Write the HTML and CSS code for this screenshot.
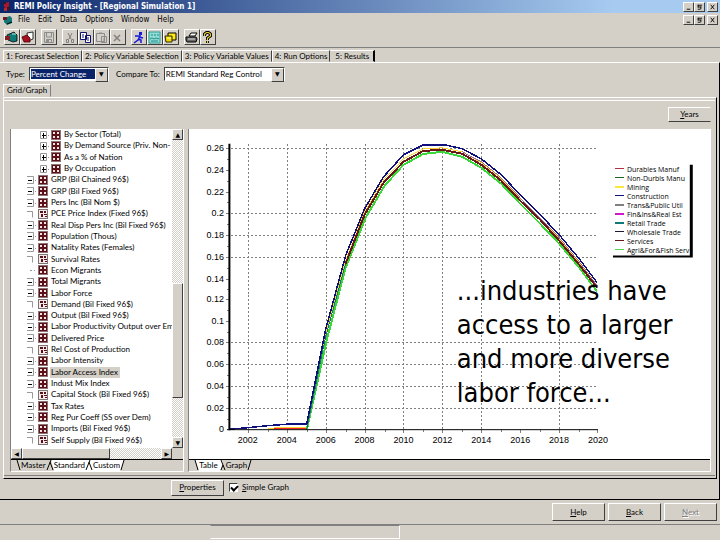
FILE: index.html
```html
<!DOCTYPE html>
<html lang="en">
<head>
<meta charset="utf-8">
<title>REMI Policy Insight - [Regional Simulation 1]</title>
<link rel="stylesheet" href="styles.css">
</head>
<body>
<svg class="defs" aria-hidden="true">
  <symbol id="node" viewBox="0 0 10 10"><rect width="10" height="10" fill="#8c7474"/><rect x="1" y="1" width="8" height="8" fill="#5c1018"/><path d="M2 2h2v2H2zM6 2h2v2H6zM2 6h2v2H2zM6 6h2v2H6z" fill="#f4e4e4"/></symbol>
  <symbol id="leaf" viewBox="0 0 10 10"><rect width="10" height="10" fill="#7c7474"/><rect x="1" y="1" width="8" height="8" fill="#f4e8e8"/><path d="M2 2h3v2H2zM6 2h2v2H6zM3 5h2v3H3zM6 5h3v1H6zM7 7h2v1H7z" fill="#581018"/></symbol>
  <symbol id="plus" viewBox="0 0 10 10"><path d="M1.500 1.500h6v7h-6z" fill="#fff" stroke="#999"/><path d="M3 5.500h4M4.500 3v5" stroke="#000"/><path d="M9 5.500h1" stroke="#999"/></symbol>
  <symbol id="minus" viewBox="0 0 10 10"><path d="M1 1.500h6.500v7H1" fill="none" stroke="#999"/><path d="M2 5.500h4" stroke="#000"/><path d="M9 5.500h1" stroke="#999"/></symbol>
  <symbol id="hook" viewBox="0 0 10 10"><path d="M1 2.500h5.500v6" fill="none" stroke="#999"/></symbol>
  <symbol id="dash" viewBox="0 0 10 10"><path d="M4 5.500h2M8 5.500h1" fill="none" stroke="#999"/></symbol>
  <symbol id="min" viewBox="0 0 10 9"><path d="M3 7h4" stroke="#000"/></symbol>
  <symbol id="res" viewBox="0 0 10 9"><path d="M3 2.500h5M3.500 2v3M3 4.500h4M6.500 4v3M3 7h3" stroke="#000" fill="none"/></symbol>
  <symbol id="cls" viewBox="0 0 10 9"><path d="M3 2l4 5M7 2L3 7" stroke="#000"/></symbol>
</svg>
<div class="app">
  <header class="titlebar">
    <svg class="appicon" viewBox="0 0 9 12"><path d="M2 2l5-1v4l-2 3-3-2z" fill="#a81828"/><path d="M1 1h3v2H1zM5 6h3v3H5z" fill="#381828"/><path d="M2 7h3v3H2z" fill="#b02838"/></svg>
    <h1>REMI Policy Insight - [Regional Simulation 1]</h1>
    <div class="winbtns"><button aria-label="Minimize"><svg><use href="#min"/></svg></button><button aria-label="Restore"><svg><use href="#res"/></svg></button><button class="close" aria-label="Close"><svg><use href="#cls"/></svg></button></div>
  </header>
  <nav class="menubar">
    <svg class="docicon" viewBox="0 0 10 11"><path d="M1 3l6-2 2 2v5l-5 2-3-3z" fill="#107878"/><path d="M0 2h4v3H0z" fill="#701820"/><path d="M4 9l5-2" stroke="#000"/></svg>
    <a href="#">File</a><a href="#">Edit</a><a href="#">Data</a><a href="#">Options</a><a href="#">Window</a><a href="#">Help</a>
    <div class="winbtns"><button aria-label="Minimize document"><svg><use href="#min"/></svg></button><button aria-label="Restore document"><svg><use href="#res"/></svg></button><button class="close" aria-label="Close document"><svg><use href="#cls"/></svg></button></div>
  </nav>
  <div class="toolbar">
    <div class="group">
      <button aria-label="Open forecast"><svg viewBox="0 0 13 13"><path d="M2 4l7-3 3 3v6l-4 1-5-2z" fill="#0c7c78" stroke="#000" stroke-width=".8"/><path d="M0 5h5v4H0z" fill="#802020"/><path d="M7 3h4" stroke="#b8e8e0"/></svg></button>
      <button aria-label="Close forecast"><svg viewBox="0 0 13 13"><path d="M6 2l6-1v7l-5 2z" fill="#fff" stroke="#000" stroke-width=".8"/><path d="M1 6l5-2 3 3v4H3z" fill="#a81020" stroke="#400" stroke-width=".8"/></svg></button>
    </div>
    <div class="group">
      <button aria-label="Save"><svg viewBox="0 0 13 13"><path d="M2.500 1.500h9v10h-9zM4.500 2v4h5V2M4.500 12V8.500h5V12" fill="none" stroke="#8c8c8c"/><path d="M5 9h2v2H5z" fill="#8c8c8c"/></svg></button>
    </div>
    <div class="group">
      <button aria-label="Cut"><svg viewBox="0 0 13 13"><path d="M5 2l3 6M9 2L6 8" stroke="#808080"/><path d="M3.500 8.500h2v3h-2zM8.500 8.500h2v3h-2z" fill="none" stroke="#808080"/></svg></button>
      <button aria-label="Copy"><svg viewBox="0 0 13 13"><path d="M1.500 1.500h6v7h-6zM6.500 4.500h5v7h-5z" fill="#fff" stroke="#10106c"/><path d="M3 4h2M3 6h2M8 7h2M8 9h2" stroke="#10106c"/></svg></button>
      <button aria-label="Paste"><svg viewBox="0 0 13 13"><path d="M1.500 2.500h8v8h-8zM6.500 5.500h5v6h-5z" fill="#d4d0c8" stroke="#8c8c8c"/><path d="M4 2h3M8 8h2M8 10h2" stroke="#8c8c8c"/></svg></button>
      <button aria-label="Delete"><svg viewBox="0 0 13 13"><path d="M3 4l6 6M9 4l-6 6" stroke="#808080" stroke-width="1.500"/></svg></button>
    </div>
    <div class="group">
      <button aria-label="Run"><svg viewBox="0 0 13 13"><path d="M7 1h3v3H7z" fill="#1818d8"/><path d="M3 5h5l-2 4-4 3M7 6l4 1M6 8l3 1v3" fill="none" stroke="#1818d8" stroke-width="1.500"/></svg></button>
      <button aria-label="Grid"><svg viewBox="0 0 13 13"><path d="M1 1h11v11H1z" fill="#90dcd4" stroke="#30a09c"/><path d="M3 4h2M6 4h2M9 4h2M2 8l2-1 2 1 2-1 3 1M3 10h7" stroke="#208c88" fill="none"/></svg></button>
      <button aria-label="Folder"><svg viewBox="0 0 13 13"><path d="M4 2h8v7H4z" fill="#ffe818" stroke="#000"/><path d="M1 5h7v6H2z" fill="#f0d808" stroke="#302800"/><path d="M3 7h4" stroke="#fff8b0"/></svg></button>
    </div>
    <div class="group">
      <button aria-label="Print"><svg viewBox="0 0 13 13"><path d="M4 5l2-3h6l-2 3z" fill="#fff" stroke="#000"/><path d="M1 6h10l1 2-1 3H2L1 9z" fill="#686868" stroke="#000"/><path d="M3 8h7" stroke="#ddd"/></svg></button>
      <button aria-label="Help"><svg viewBox="0 0 13 13"><path d="M3.500 5V3l2-1.500h2L9.500 3v2l-3 2v2M6.500 10v2" fill="none" stroke="#000" stroke-width="3"/><path d="M3.500 5V3l2-1.500h2L9.500 3v2l-3 2v2M6.500 10v2" fill="none" stroke="#e8d020" stroke-width="1.200"/></svg></button>
    </div>
  </div>
  <div class="steps" role="tablist">
    <button role="tab">1: Forecast Selection</button><button role="tab">2: Policy Variable Selection</button><button role="tab">3: Policy Variable Values</button><button role="tab">4: Run Options</button><button role="tab" class="on" aria-selected="true">5: Results</button>
  </div>
  <main class="page">
    <div class="filters">
      <label for="type">Type:</label>
      <span class="pick pick-type"><select id="type"><option>Percent Change</option></select></span>
      <label for="cmp">Compare To:</label>
      <span class="pick pick-cmp"><select id="cmp"><option>REMI Standard Reg Control</option></select></span>
    </div>
    <div class="subtabs"><button>Grid/Graph</button></div>
    <section class="frame">
      <div class="frame-in">
        <div class="years"><button class="btn"><u>Y</u>ears</button></div>
        <div class="panes">
          <div class="pane">
            <div class="treebox">
              <ul class="tree">
                <li class="sub"><svg><use href="#plus"/></svg><svg><use href="#node"/></svg><span>By Sector (Total)</span></li>
                <li class="sub"><svg><use href="#plus"/></svg><svg><use href="#node"/></svg><span>By Demand Source (Priv. Non-</span></li>
                <li class="sub"><svg><use href="#plus"/></svg><svg><use href="#node"/></svg><span>As a % of Nation</span></li>
                <li class="sub"><svg><use href="#plus"/></svg><svg><use href="#node"/></svg><span>By Occupation</span></li>
                <li><svg><use href="#minus"/></svg><svg><use href="#node"/></svg><span>GRP (Bil Chained 96$)</span></li>
                <li><svg><use href="#minus"/></svg><svg><use href="#node"/></svg><span>GRP (Bil Fixed 96$)</span></li>
                <li><svg><use href="#minus"/></svg><svg><use href="#node"/></svg><span>Pers Inc (Bil Nom $)</span></li>
                <li><svg><use href="#hook"/></svg><svg><use href="#leaf"/></svg><span>PCE Price Index (Fixed 96$)</span></li>
                <li><svg><use href="#minus"/></svg><svg><use href="#node"/></svg><span>Real Disp Pers Inc (Bil Fixed 96$)</span></li>
                <li><svg><use href="#minus"/></svg><svg><use href="#node"/></svg><span>Population (Thous)</span></li>
                <li><svg><use href="#minus"/></svg><svg><use href="#node"/></svg><span>Natality Rates (Females)</span></li>
                <li><svg><use href="#hook"/></svg><svg><use href="#leaf"/></svg><span>Survival Rates</span></li>
                <li><svg><use href="#dash"/></svg><svg><use href="#node"/></svg><span>Econ Migrants</span></li>
                <li><svg><use href="#minus"/></svg><svg><use href="#node"/></svg><span>Total Migrants</span></li>
                <li><svg><use href="#minus"/></svg><svg><use href="#node"/></svg><span>Labor Force</span></li>
                <li><svg><use href="#hook"/></svg><svg><use href="#leaf"/></svg><span>Demand (Bil Fixed 96$)</span></li>
                <li><svg><use href="#minus"/></svg><svg><use href="#node"/></svg><span>Output (Bil Fixed 96$)</span></li>
                <li><svg><use href="#minus"/></svg><svg><use href="#node"/></svg><span>Labor Productivity Output over Em</span></li>
                <li><svg><use href="#minus"/></svg><svg><use href="#node"/></svg><span>Delivered Price</span></li>
                <li><svg><use href="#hook"/></svg><svg><use href="#leaf"/></svg><span>Rel Cost of Production</span></li>
                <li><svg><use href="#minus"/></svg><svg><use href="#node"/></svg><span>Labor Intensity</span></li>
                <li><svg><use href="#minus"/></svg><svg><use href="#node"/></svg><span class="sel">Labor Access Index</span></li>
                <li><svg><use href="#minus"/></svg><svg><use href="#node"/></svg><span>Indust Mix Index</span></li>
                <li><svg><use href="#hook"/></svg><svg><use href="#leaf"/></svg><span>Capital Stock (Bil Fixed 96$)</span></li>
                <li><svg><use href="#minus"/></svg><svg><use href="#node"/></svg><span>Tax Rates</span></li>
                <li><svg><use href="#minus"/></svg><svg><use href="#node"/></svg><span>Reg Pur Coeff (SS over Dem)</span></li>
                <li><svg><use href="#minus"/></svg><svg><use href="#node"/></svg><span>Imports (Bil Fixed 96$)</span></li>
                <li><svg><use href="#hook"/></svg><svg><use href="#leaf"/></svg><span>Self Supply (Bil Fixed 96$)</span></li>
              </ul>
              <div class="vbar"><i class="cap up"></i><i class="gap-a"></i><i class="thumb"></i><i class="gap-b"></i><i class="cap down"></i></div>
              <div class="hbar"><i class="cap left"></i><i class="thumb"></i><i class="gap-b"></i><i class="cap right"></i></div>
            </div>
            <div class="sheets">
              <svg class="edge" viewBox="0 0 5 11"><path d="M1 0l3 10" stroke="#000"/></svg><button>Master</button><svg class="join" viewBox="0 0 8 11"><path d="M5 0h3v10z" fill="#fff"/><path d="M5 0L1 10M4 2l3 8" stroke="#000"/></svg><button class="off">Standard</button><svg class="join" viewBox="0 0 8 11"><path d="M0 0h8v11H0z" fill="#fff"/><path d="M5 0L1 10M4 2l3 8" stroke="#000"/></svg><button class="off">Custom</button><svg class="edge" viewBox="0 0 5 11"><path d="M0 0h4L1 10H0z" fill="#fff"/><path d="M4 0L1 10" stroke="#000"/></svg>
            </div>
          </div>
          <div class="pane">
            <div class="chartbox">
              <svg class="chart" viewBox="188 129 522 329" role="img" aria-label="Labor access index by industry">
                <g class="grid">
                  <path d="M230 147.500H598M230 212.500H598M230 234.500H598M230 256.500H598M230 342.500H598M230 364.500H598M230 386.500H598M230 408.500H598"/>
                  <path d="M247.500 143V429M286.500 143V429M325.500 143V429M364.500 143V429M403.500 143V429M442.500 143V429M481.500 143V429M559.500 143V429"/>
                </g>
                <path class="ticks" d="M225 147.500h3M225 169.500h3M225 191.500h3M225 212.500h3M225 234.500h3M225 256.500h3M225 278.500h3M225 299.500h3M225 321.500h3M225 342.500h3M225 364.500h3M225 386.500h3M225 408.500h3M226 158.500h2M226 180.500h2M226 201.500h2M226 223.500h2M226 245.500h2M226 267.500h2M226 288.500h2M226 310.500h2M226 332.500h2M226 353.500h2M226 375.500h2M226 397.500h2M226 419.500h2M247.500 430v3M267.500 430v2M286.500 430v3M306.500 430v2M325.500 430v3M345.500 430v2M364.500 430v3M384.500 430v2M403.500 430v3M423.500 430v2M442.500 430v3M462.500 430v2M481.500 430v3M501.500 430v2M520.500 430v3M540.500 430v2M559.500 430v3M579.500 430v2M597.500 430v3"/>
                <path class="line" stroke="#f02020" d="M267 428.500L306 428.500"/>
                <path class="line" stroke="#ffd030" d="M267 428L306 427L325 333L345 260L364 211L383 179L403 158L423 148L442 147L462 151L481 162L501 178L520 198L540 217L559 238L579 262L597 285"/>
                <path class="line wide" stroke="#38d838" d="M306 430L326 340L345 267L365 217L384 185L403 164L423 153L442 151L462 156L481 167L501 183L520 203L540 223L559 243L579 267L597 291"/>
                <path class="line" stroke="#207070" d="M306 429L325 336L345 263"/>
                <path class="line" stroke="#987098" d="M462 151L481 161L501 177L520 197L540 217L559 237L579 261L597 285"/>
                <path class="line wide" stroke="#681818" d="M345 263L364 214L383 182L403 161L423 150L442 149L462 153L481 164L501 180L520 200L540 219L559 240L579 264L597 287"/>
                <path class="line blue" stroke="#10107c" d="M229 429L247 427.500L267 425.500L286 424L306 424L325 329L345 255L364 208L383 176L403 154L423 144L445 144L462 148L481 158L501 174L520 194L540 214L559 234L579 258L597 282"/>
                <path d="M228.500 143V430" stroke="#000" stroke-width="2"/><path d="M226 429.500H598" stroke="#000"/>
                <g class="ylab">
                  <text x="223" y="150">0.26</text><text x="223" y="172">0.24</text><text x="223" y="194">0.22</text><text x="223" y="215">0.2</text><text x="223" y="237">0.18</text><text x="223" y="259">0.16</text><text x="223" y="281">0.14</text><text x="223" y="302">0.12</text><text x="223" y="324">0.1</text><text x="223" y="345">0.08</text><text x="223" y="367">0.06</text><text x="223" y="389">0.04</text><text x="223" y="411">0.02</text><text x="223" y="432">0</text>
                </g>
                <g class="xlab">
                  <text x="247" y="443">2002</text><text x="286" y="443">2004</text><text x="325" y="443">2006</text><text x="364" y="443">2008</text><text x="403" y="443">2010</text><text x="442" y="443">2012</text><text x="481" y="443">2014</text><text x="520" y="443">2016</text><text x="559" y="443">2018</text><text x="598" y="443">2020</text>
                </g>
                <path d="M613 164h80v93h-80z" fill="#000"/><path d="M612 162h78v93h-78z" fill="#fff"/>
                <g class="keys">
                  <path stroke="#b03040" d="M615 168h9"/><path stroke="#206020" d="M615 177h9"/><path stroke="#f8e840" stroke-width="2" d="M615 186h9"/><path stroke="#101080" d="M615 195h9"/><path stroke="#808080" stroke-width="2" d="M615 204h9"/><path stroke="#d018d0" stroke-width="2" d="M615 213h9"/><path stroke="#107878" stroke-width="2" d="M615 222h9"/><path stroke="#181830" d="M615 231h9"/><path stroke="#601818" d="M615 240h9"/><path stroke="#50d850" d="M615 249h9"/>
                </g>
                <g class="legend">
                  <text x="627" y="171">Durables Manuf</text><text x="627" y="180">Non-Durbls Manu</text><text x="627" y="189">Mining</text><text x="627" y="198">Construction</text><text x="627" y="207">Trans&amp;Public Util</text><text x="627" y="216">Fin&amp;Ins&amp;Real Est</text><text x="627" y="225">Retail Trade</text><text x="627" y="234">Wholesale Trade</text><text x="627" y="243">Services</text><text x="627" y="252">Agri&amp;For&amp;Fish Serv</text>
                </g>
              </svg>
              <p class="note">...industries have access to a larger and more diverse labor force...</p>
            </div>
            <div class="sheets">
              <svg class="edge" viewBox="0 0 5 11"><path d="M1 0h4v11z" fill="#fff"/><path d="M1 0l3 10" stroke="#000"/></svg><button class="off">Table</button><svg class="join" viewBox="0 0 8 11"><path d="M0 0h4l1 3-3 8H0z" fill="#fff"/><path d="M3 0l4 10M5 5L3 10" stroke="#000"/></svg><button>Graph</button><svg class="edge" viewBox="0 0 5 11"><path d="M4 0L1 10" stroke="#000"/></svg>
            </div>
          </div>
        </div>
      </div>
    </section>
    <div class="props">
      <button class="btn"><u>P</u>roperties</button>
      <label><input type="checkbox" checked><span><u>S</u>imple Graph</span></label>
    </div>
  </main>
  <div class="wizard">
    <button class="btn"><u>H</u>elp</button><button class="btn"><u>B</u>ack</button><button class="btn" disabled><u>N</u>ext</button>
  </div>
  <footer class="status"><span></span><span class="progress"></span><span></span></footer>
</div>
</body>
</html>
```
FILE: styles.css
```css
:root {
  --face: #d4d0c8;
  --shade: #808080;
  --dark: #404040;
  --ui: Lato, "Liberation Sans", sans-serif;
}
* { box-sizing: border-box; }
body { margin: 0; background: var(--face); color: #000; font: 8px/11px var(--ui); }
button, select, input { font: inherit; color: inherit; margin: 0; padding: 0; border-radius: 0; }
button { background: var(--face); border: 0; }
.defs { position: absolute; width: 0; height: 0; }
.app { display: flex; flex-direction: column; height: 100vh; min-height: 540px; overflow: hidden; }

.titlebar { display: flex; align-items: center; height: 13px; padding: 0 2px; background: linear-gradient(90deg, #0a246a, #a6caf0 85%); }
.titlebar h1 { flex: 1; margin: 0; font: bold 8px/12px "DejaVu Sans Condensed", "DejaVu Sans", sans-serif; color: #fff; }
.appicon { width: 9px; height: 12px; margin-right: 3px; }
.winbtns { display: flex; }
.winbtns button { width: 11px; height: 10px; border: 1px solid; border-color: #fff var(--dark) var(--dark) #fff; }
.winbtns svg { display: block; width: 9px; height: 8px; }
.winbtns .close { margin-left: 2px; }

.menubar { display: flex; align-items: center; gap: 8px; height: 14px; padding: 0 2px; font: 8px/12px "DejaVu Sans Condensed", sans-serif; }
.menubar a { color: #000; text-decoration: none; }
.menubar .winbtns { margin-left: auto; }
.docicon { width: 10px; height: 11px; margin: 0 -3px 0 1px; }

.toolbar { display: flex; align-items: center; gap: 5px; height: 21px; padding: 1px 4px; border-bottom: 1px solid var(--shade); }
.group { display: flex; }
.toolbar button { width: 16px; height: 16px; border: 1px solid; border-color: #fff var(--dark) var(--dark) #fff; }
.toolbar svg { display: block; width: 13px; height: 13px; }

.steps { display: flex; height: 14px; padding: 2px 0 0 3px; }
.steps button { height: 12px; padding: 0 2px; border: 1px solid; border-color: #fff var(--dark) transparent #fff; }
.steps .on { border-left-color: transparent; padding: 0 4px; border-right: 2px solid #000; }

.page { display: flex; flex: 1; flex-direction: column; min-height: 0; border: solid; border-width: 1px 1px 1px 0; border-color: #fff #000 #000; }
.filters { display: flex; align-items: center; height: 21px; padding: 1px 6px 0; }
.pick { position: relative; margin: 0 7px 0 4px; }
.pick-type { width: 80px; }
.pick-cmp { width: 121px; }
.pick select { display: block; width: 100%; height: 14px; padding: 1px 12px 1px 1px; appearance: none; background: #fff; border: 1px solid; border-color: var(--dark) #fff #fff var(--dark); line-height: 10px; }
.pick-type select { background-color: #0a246a; color: #fff; box-shadow: inset 0 0 0 1px #fff; }
.pick::after { position: absolute; top: 1px; right: 1px; width: 11px; height: 12px; content: "▼"; background: var(--face); border: 1px solid; border-color: #fff var(--dark) var(--dark) #fff; font: 6px/10px "DejaVu Sans", sans-serif; text-align: center; pointer-events: none; }
.subtabs { display: flex; height: 13px; padding-left: 3px; }
.subtabs button { width: 48px; border: 1px solid; border-color: #fff var(--shade) transparent #fff; }

.frame { display: flex; flex: 1; min-height: 0; margin: 0 2px 0 3px; border: 1px solid; border-color: #fff #000 #000 #fff; }
.frame-in { display: flex; flex: 1; flex-direction: column; min-width: 0; margin: 2px 1px 2px 0; padding: 6px 4px 3px 6px; border: solid; border-width: 1px 0; border-color: #fff transparent var(--shade); }
.btn { height: 16px; background: var(--face); border: 1px solid; border-color: #fff var(--dark) var(--dark) #fff; }
.years { display: flex; justify-content: flex-end; margin-bottom: 7px; }
.years .btn { width: 43px; height: 15px; border-right-color: var(--face); }

.panes { display: grid; flex: 1; grid-template-columns: 1fr 3fr; gap: 4px; min-height: 0; }
.pane { display: flex; flex-direction: column; min-width: 0; min-height: 0; border: solid; border-width: 0 1px 1px; border-color: #fff #fff #fff var(--shade); }
.treebox { display: grid; flex: 1; grid-template: minmax(0, 1fr) 11px / minmax(0, 1fr) 11px; min-height: 0; }
.tree { display: grid; grid-template-rows: repeat(28, 5fr) 1fr; min-height: 0; margin: 0; padding: 0; overflow: hidden; background: #fff; list-style: none; }
.tree li { display: flex; align-items: center; min-height: 0; padding-left: 15px; white-space: nowrap; line-height: 11px; }
.tree .sub { padding-left: 28px; }
.tree svg { flex: none; width: 10px; height: 10px; margin-right: 2px; }
.tree span { padding-left: 1px; }
.tree .sel { padding-right: 2px; background: var(--face); }

.vbar { display: flex; flex-direction: column; }
.hbar { display: flex; }
.vbar, .hbar { background: repeating-conic-gradient(#fff 0 25%, #d4d0c8 0 50%) 0 0 / 2px 2px; }
.cap { display: flex; flex: none; align-items: center; justify-content: center; width: 11px; height: 11px; font: 6px/9px "DejaVu Sans", sans-serif; }
.cap, .thumb { background: var(--face); border: 1px solid; border-color: #fff var(--dark) var(--dark) #fff; }
.up::before { content: "▲"; }
.down::before { content: "▼"; }
.left::before { content: "◀"; }
.right::before { content: "▶"; }
.vbar .gap-a { flex: 144; }
.vbar .thumb { flex: 114; }
.vbar .gap-b { flex: 39; }
.hbar .thumb { flex: 87; }
.hbar .gap-b { flex: 52; }
i { font-style: normal; }

.sheets { display: flex; flex: none; height: 12px; padding-left: 5px; border-top: 1px solid #000; }
.sheets svg { height: 11px; }
.edge { width: 5px; }
.join { width: 8px; }
.sheets .off { background: #fff; }

.chartbox { position: relative; flex: 1; min-height: 0; background: #fff; }
.chart { display: block; width: 100%; height: 100%; }
.grid { fill: none; stroke: #808080; stroke-dasharray: 2 2; }
.ticks { fill: none; stroke: #808080; }
.grid, .ticks, .line, .keys { shape-rendering: crispEdges; }
.line { fill: none; stroke-width: 1; }
.wide { stroke-width: 2; }
.blue { stroke-width: 1.5; }
.chart text { font: 9px "Liberation Sans", sans-serif; }
.ylab { text-anchor: end; }
.xlab { text-anchor: middle; }
.chart .legend text { font: 7px "Open Sans", sans-serif; }
.note { position: absolute; top: 44%; left: 51%; width: 230px; margin: 0; padding-left: 2px; font: 27px/34px "DejaVu Sans Condensed", "DejaVu Sans", sans-serif; }

.props { display: flex; align-items: center; height: 20px; padding-left: 171px; }
.props .btn { width: 53px; margin-bottom: 3px; }
.props label { display: flex; align-items: center; gap: 4px; margin: 0 0 4px 5px; }
.props input { appearance: none; width: 9px; height: 9px; background: #fff; border: 1px solid; border-color: var(--dark) #fff #fff var(--dark); }
.props input:checked::before { display: block; width: 5px; height: 3px; margin: 1px; content: ""; border: solid #000; border-width: 0 0 2px 2px; transform: rotate(-45deg); }

.wizard { display: flex; justify-content: flex-end; gap: 3px; height: 24px; padding: 3px 3px 0; }
.wizard .btn { width: 53px; height: 18px; }
.wizard .btn:disabled { color: var(--shade); text-shadow: 1px 1px #fff; }
.status { display: grid; grid-template-columns: 210fr 190fr 320fr; height: 16px; border-top: 1px solid var(--shade); }
.progress { margin-bottom: 1px; border: 1px solid; border-color: var(--shade) #fff #fff transparent; }
```
